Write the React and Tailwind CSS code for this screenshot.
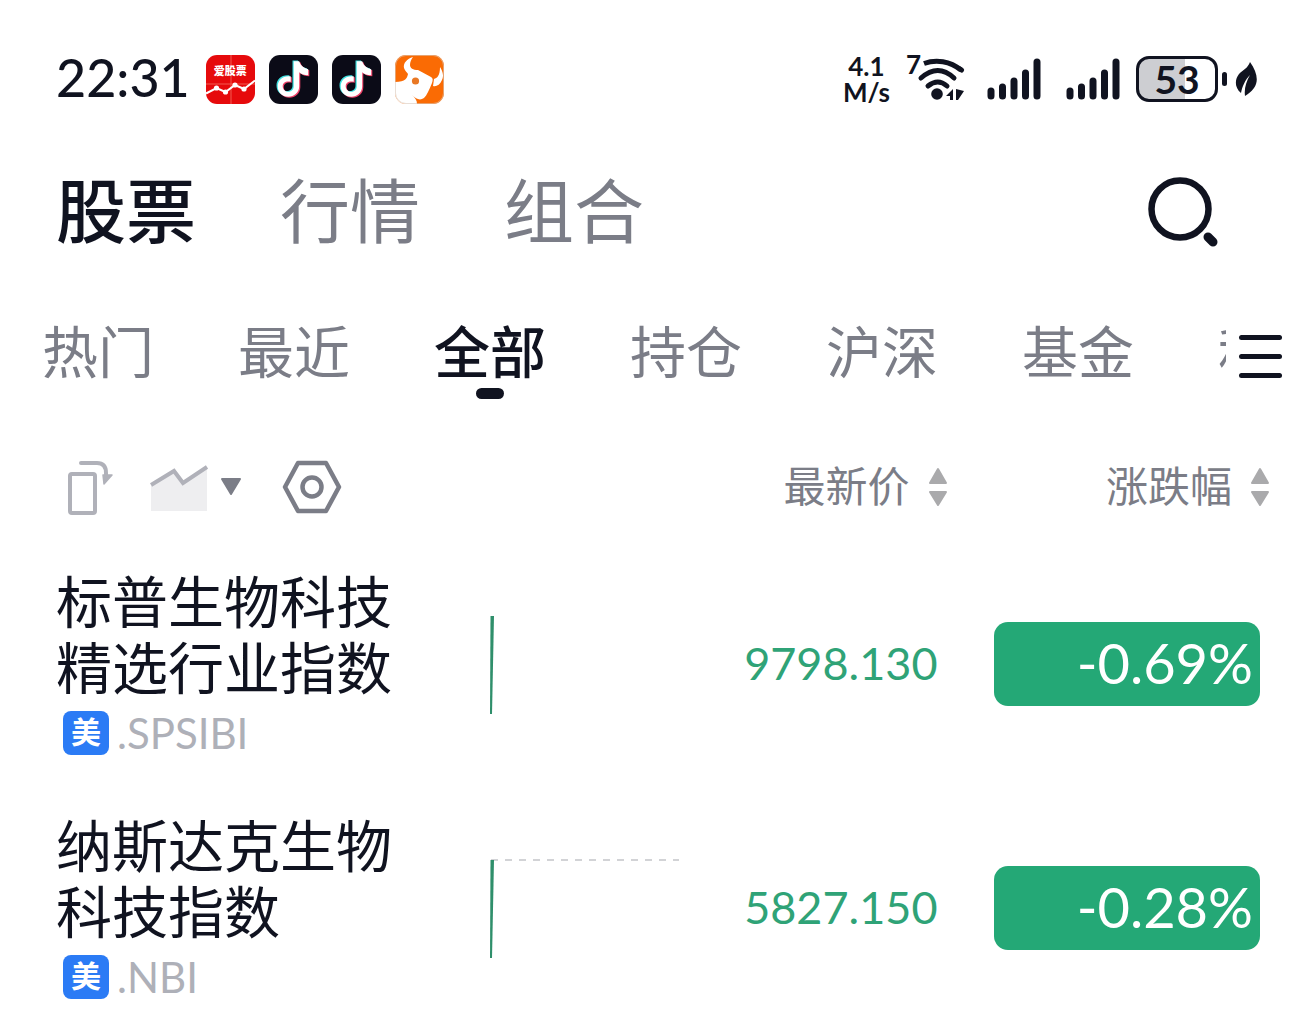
import { useState } from 'react';
import clsx from 'clsx';

const mainTabs = ['股票', '行情', '组合'];
const groups = ['热门', '最近', '全部', '持仓', '沪深', '基金', '科创'];

const stocks = [
  {
    lines: ['标普生物科技', '精选行业指数'],
    market: '美',
    symbol: '.SPSIBI',
    price: '9798.130',
    change: '-0.69%',
    baseline: false,
  },
  {
    lines: ['纳斯达克生物', '科技指数'],
    market: '美',
    symbol: '.NBI',
    price: '5827.150',
    change: '-0.28%',
    baseline: true,
  },
];

const StockAppIcon = () => (
  <div className="relative h-[49px] w-[49px] overflow-hidden rounded-[11px] bg-[#e60a0c]">
    <svg viewBox="0 0 49 49" className="h-full w-full">
      <path d="M25 0v49M0 29h49" stroke="#f25a50" strokeWidth="1" />
      <path d="M0 38.500 10.500 33l9 4 9.500-7 9 4 11-8.500" fill="none" stroke="#fff" strokeWidth="2" />
      <circle cx="10.500" cy="33" r="2.600" fill="#fff" />
      <circle cx="19.500" cy="37" r="2.600" fill="#fff" />
      <circle cx="29" cy="30" r="2.600" fill="#fff" />
      <circle cx="38" cy="34" r="2.600" fill="#fff" />
    </svg>
    <span className="absolute inset-x-0 top-[7px] text-center text-[11px] leading-4 font-black text-white">
      爱股票
    </span>
  </div>
);

const notePath =
  'M24 6h5.500c1 4 4 6.500 9 8v6c-4 0-7-1-9-3v14c0 6-5 10.500-11 10.500S8 37 8 31s5-11 13-10v5.500c-5-1-8 1-8 4.500s3 5.500 5.500 5.500S24 35 24 31z';

const TikTokIcon = () => (
  <svg viewBox="0 0 49 49" className="h-[49px] w-[49px]">
    <rect width="49" height="49" rx="11" fill="#0b0b17" />
    <path d={notePath} fill="#3fe0e0" transform="translate(-.5 -.5)" />
    <path d={notePath} fill="#f0436a" transform="translate(1.800 1.200)" />
    <path d={notePath} fill="#fff" transform="translate(.7 .3)" />
  </svg>
);

const BullIcon = () => (
  <svg viewBox="0 0 49 49" className="h-[49px] w-[49px]">
    <defs>
      <clipPath id="bull">
        <rect width="49" height="49" rx="11" />
      </clipPath>
    </defs>
    <g clipPath="url(#bull)">
      <rect width="49" height="49" fill="#fa6b04" />
      <path
        d="M18 2C12 4 8 8 9 13c1 3 3 4 4 6-1 4-2 8-13 8v22h22c0-4-2-6-5-9 4 4 8 6 12 3 3-3 5-8 8-15 1-3 1-5-1-6l-13-7c-5 0-8-2-8-5s1-5 3-8z"
        fill="#fff"
      />
      <path d="M45 12c3 5 4 9 2 13-2 5-6 7-9 6l1-7c3-1 6-3 6-12z" fill="#fff" />
      <circle cx="20.500" cy="26" r="3.600" fill="#e97824" />
    </g>
    <rect x=".5" y=".5" width="48" height="48" rx="10.500" fill="none" stroke="#d9c8bb" strokeOpacity=".6" />
  </svg>
);

const WifiIcon = () => (
  <svg viewBox="0 0 60 50" className="h-[50px] w-[60px] overflow-visible" fill="none" stroke="#101320">
    <g strokeWidth="5" strokeLinecap="round">
      <path d="M17 9.500C29 5 43 7 54 16" strokeLinecap="butt" />
      <path d="M53 15l1.500 1" />
      <path d="M14 24Q31 9 47 24" />
      <path d="M21 32Q31 24 40 32" />
    </g>
    <circle cx="30" cy="40" r="5.800" fill="#101320" stroke="none" />
    <path d="M46 35v11h-3v-4h-4zM49 35l8 2-6 9h-2z" fill="#101320" stroke="none" />
    <text x="-1" y="20" fill="#101320" stroke="none" className="font-['Lato'] text-[26px] font-bold">
      7
    </text>
  </svg>
);

const SignalIcon = () => (
  <svg viewBox="0 0 54 44" className="h-[44px] w-[54px]" stroke="#101320" strokeWidth="7" strokeLinecap="round">
    <path d="M4 34v5M15.500 30v9M27 24v15M38.500 16v23M50 5v34" />
  </svg>
);

const BatteryIcon = () => (
  <div className="flex items-center gap-1">
    <div className="flex h-[46px] w-[82px] items-center justify-center rounded-[13px] border-[3px] border-[#101320] bg-linear-to-r from-[#cdced2] from-60% to-white to-60% font-['Lato'] text-[39px] leading-[40px] font-bold">
      53
    </div>
    <div className="h-[14px] w-[5px] rounded-full bg-[#101320]" />
  </div>
);

const LeafIcon = () => (
  <svg viewBox="0 0 22 36" className="h-[36px] w-[22px]">
    <path d="M15 1c7 10 9 19 4 26-3 4-6 6-9 8-1-7 1-14 5-21C10 19 7 26 6 32-1 26 0 18 4 13c4-4 9-6 11-12z" fill="#101320" />
  </svg>
);

const SortIcon = () => (
  <svg viewBox="0 0 20 40" className="h-[40px] w-[20px]" fill="#aaaaac" stroke="#aaaaac" strokeWidth="2" strokeLinejoin="round">
    <path d="M10 2 18 16H2zM10 38 18 25H2z" />
  </svg>
);

const StatusBar = () => (
  <header className="flex items-center justify-between pt-[53px] pr-[59px] pl-14">
    <div className="flex items-center gap-[14px]">
      <time className="mr-[2px] pb-1 font-['Lato'] text-[52px] leading-[48px] font-medium">22:31</time>
      <StockAppIcon />
      <TikTokIcon />
      <TikTokIcon />
      <BullIcon />
    </div>
    <div className="flex items-center">
      <div className="mr-[17px] text-center font-['Lato'] text-[26px] leading-[26px] font-bold">
        4.1
        <br />
        M/s
      </div>
      <WifiIcon />
      <div className="mr-4 ml-5 flex gap-[25px]">
        <SignalIcon />
        <SignalIcon />
      </div>
      <BatteryIcon />
      <div className="ml-2">
        <LeafIcon />
      </div>
    </div>
  </header>
);

const SortHeader = ({ label }) => (
  <button className="ml-auto flex items-center gap-[18px] text-[42px] leading-[52px] whitespace-nowrap text-[#7b7d87]">
    <span className="pb-[6px]">{label}</span>
    <SortIcon />
  </button>
);

const StockRow = ({ data }) => (
  <tr className="group">
    <td className="pb-12 pl-14 group-last:pb-4">
      <div className="text-[56px] leading-[66px] whitespace-nowrap">
        {data.lines.map((line) => (
          <p key={line}>{line}</p>
        ))}
      </div>
      <div className="mt-[6px] flex h-[58px] items-center gap-2 pl-[7px]">
        <span className="flex h-[44px] w-[46px] items-center justify-center rounded-lg bg-[#2b7bf5] pb-[6px] text-[30px] leading-[30px] font-bold text-white">
          {data.market}
        </span>
        <span className="font-['Lato'] text-[42px] leading-[48px] text-[#aeb0b8]">{data.symbol}</span>
      </div>
    </td>
    <td className="pb-12 group-last:pb-4">
      <svg viewBox="0 0 196 100" className="h-[100px] w-[196px]">
        {data.baseline && <path d="M4 2h188" stroke="#d2d3d6" strokeWidth="2" strokeDasharray="7 7" />}
        <path d="M3.500 2h3.500l-2 98H3z" fill="#2f8f6b" />
      </svg>
    </td>
    <td className="pr-[10px] pb-12 text-right font-['Lato'] text-[45px] text-[#2fa377] group-last:pb-4">
      {data.price}
    </td>
    <td className="pr-14 pb-12 group-last:pb-4">
      <div className="ml-auto h-[84px] w-[266px] rounded-[14px] bg-[#24a876] pr-[7px] text-right font-['Lato'] text-[56px] leading-[82px] text-white">
        {data.change}
      </div>
    </td>
  </tr>
);

const App = () => {
  const [mainTab, setMainTab] = useState('股票');
  const [group, setGroup] = useState('全部');

  return (
    <div lang="zh-CN" className="bg-white font-['Noto_Sans_CJK_SC',sans-serif] text-[#101320]">
      <StatusBar />

      <div className="flex items-start justify-between pt-[65px] pr-[98px] pl-14">
        <nav className="flex gap-[84px]">
          {mainTabs.map((tab) => (
            <button
              key={tab}
              onClick={() => setMainTab(tab)}
              className={clsx(
                'text-[70px] leading-[76px]',
                tab === mainTab ? 'font-medium' : 'text-[#7b7d87]'
              )}
            >
              {tab}
            </button>
          ))}
        </nav>
        <button aria-label="搜索" className="mt-[7px]">
          <svg viewBox="0 0 70 70" className="h-[70px] w-[70px]" fill="none" stroke="#101320">
            <circle cx="32" cy="32" r="28.500" strokeWidth="6.500" />
            <path d="M60 60l5 5" strokeWidth="9" strokeLinecap="round" />
          </svg>
        </button>
      </div>

      <div className="flex items-start pt-[61px] pr-[34px] pl-[42px]">
        <nav className="flex min-w-0 flex-1 gap-[84px] overflow-hidden">
          {groups.map((item) => (
            <button
              key={item}
              onClick={() => setGroup(item)}
              className={clsx(
                'flex shrink-0 flex-col items-center text-[56px] leading-[82px]',
                item === group ? 'font-medium' : 'text-[#7b7d87]'
              )}
            >
              {item}
              {item === group && <span className="-mt-[2px] h-[11px] w-7 rounded-full bg-[#101320]" />}
            </button>
          ))}
        </nav>
        <button aria-label="分组" className="mt-[27px] ml-[13px] flex flex-col gap-[14px]">
          <span className="h-[5px] w-[43px] rounded-full bg-[#101320]" />
          <span className="h-[5px] w-[43px] rounded-full bg-[#101320]" />
          <span className="h-[5px] w-[43px] rounded-full bg-[#101320]" />
        </button>
      </div>

      <table className="mt-[59px] w-full table-fixed">
        <thead>
          <tr>
            <th className="w-[37%] pb-[50px] pl-[66px] font-normal">
              <div className="flex items-center">
                <button aria-label="横屏" className="mr-9">
                  <svg viewBox="0 0 48 56" className="h-[56px] w-[48px]" fill="none" stroke="#b0b1b9" strokeWidth="4">
                    <rect x="4" y="15" width="25" height="39" rx="2" />
                    <path d="M15 4h16q9 0 9 10v4" strokeLinecap="round" />
                    <path d="M37 16h9l-8 9z" fill="#b0b1b9" strokeWidth="1.500" strokeLinejoin="round" />
                  </svg>
                </button>
                <button aria-label="走势图" className="mr-10 flex items-center gap-3">
                  <svg viewBox="0 0 58 48" className="h-[48px] w-[58px]">
                    <path d="M1 23 24 9l9 12L57 5v43H1z" fill="#eeeef0" />
                    <path d="M1 22 24 8l9 12L57 4" fill="none" stroke="#b0b1b9" strokeWidth="4" />
                  </svg>
                  <svg viewBox="0 0 22 20" className="h-[20px] w-[22px]">
                    <path d="M2 2h18l-9 15z" fill="#7b7d87" stroke="#7b7d87" strokeWidth="2" strokeLinejoin="round" />
                  </svg>
                </button>
                <button aria-label="设置">
                  <svg viewBox="0 0 60 54" className="h-[54px] w-[60px]" fill="none" stroke="#7b7d87" strokeWidth="4.500" strokeLinejoin="round">
                    <path d="M16 3h28l13 24-13 24H16L3 27z" />
                    <circle cx="30" cy="27" r="9.500" />
                  </svg>
                </button>
              </div>
            </th>
            <th className="w-[16%]" />
            <th className="w-[19%] pb-[50px] font-normal">
              <SortHeader label="最新价" />
            </th>
            <th className="w-[28%] pr-[46px] pb-[50px] font-normal">
              <SortHeader label="涨跌幅" />
            </th>
          </tr>
        </thead>
        <tbody>
          {stocks.map((stock) => (
            <StockRow key={stock.symbol} data={stock} />
          ))}
        </tbody>
      </table>
    </div>
  );
};

export default App;
